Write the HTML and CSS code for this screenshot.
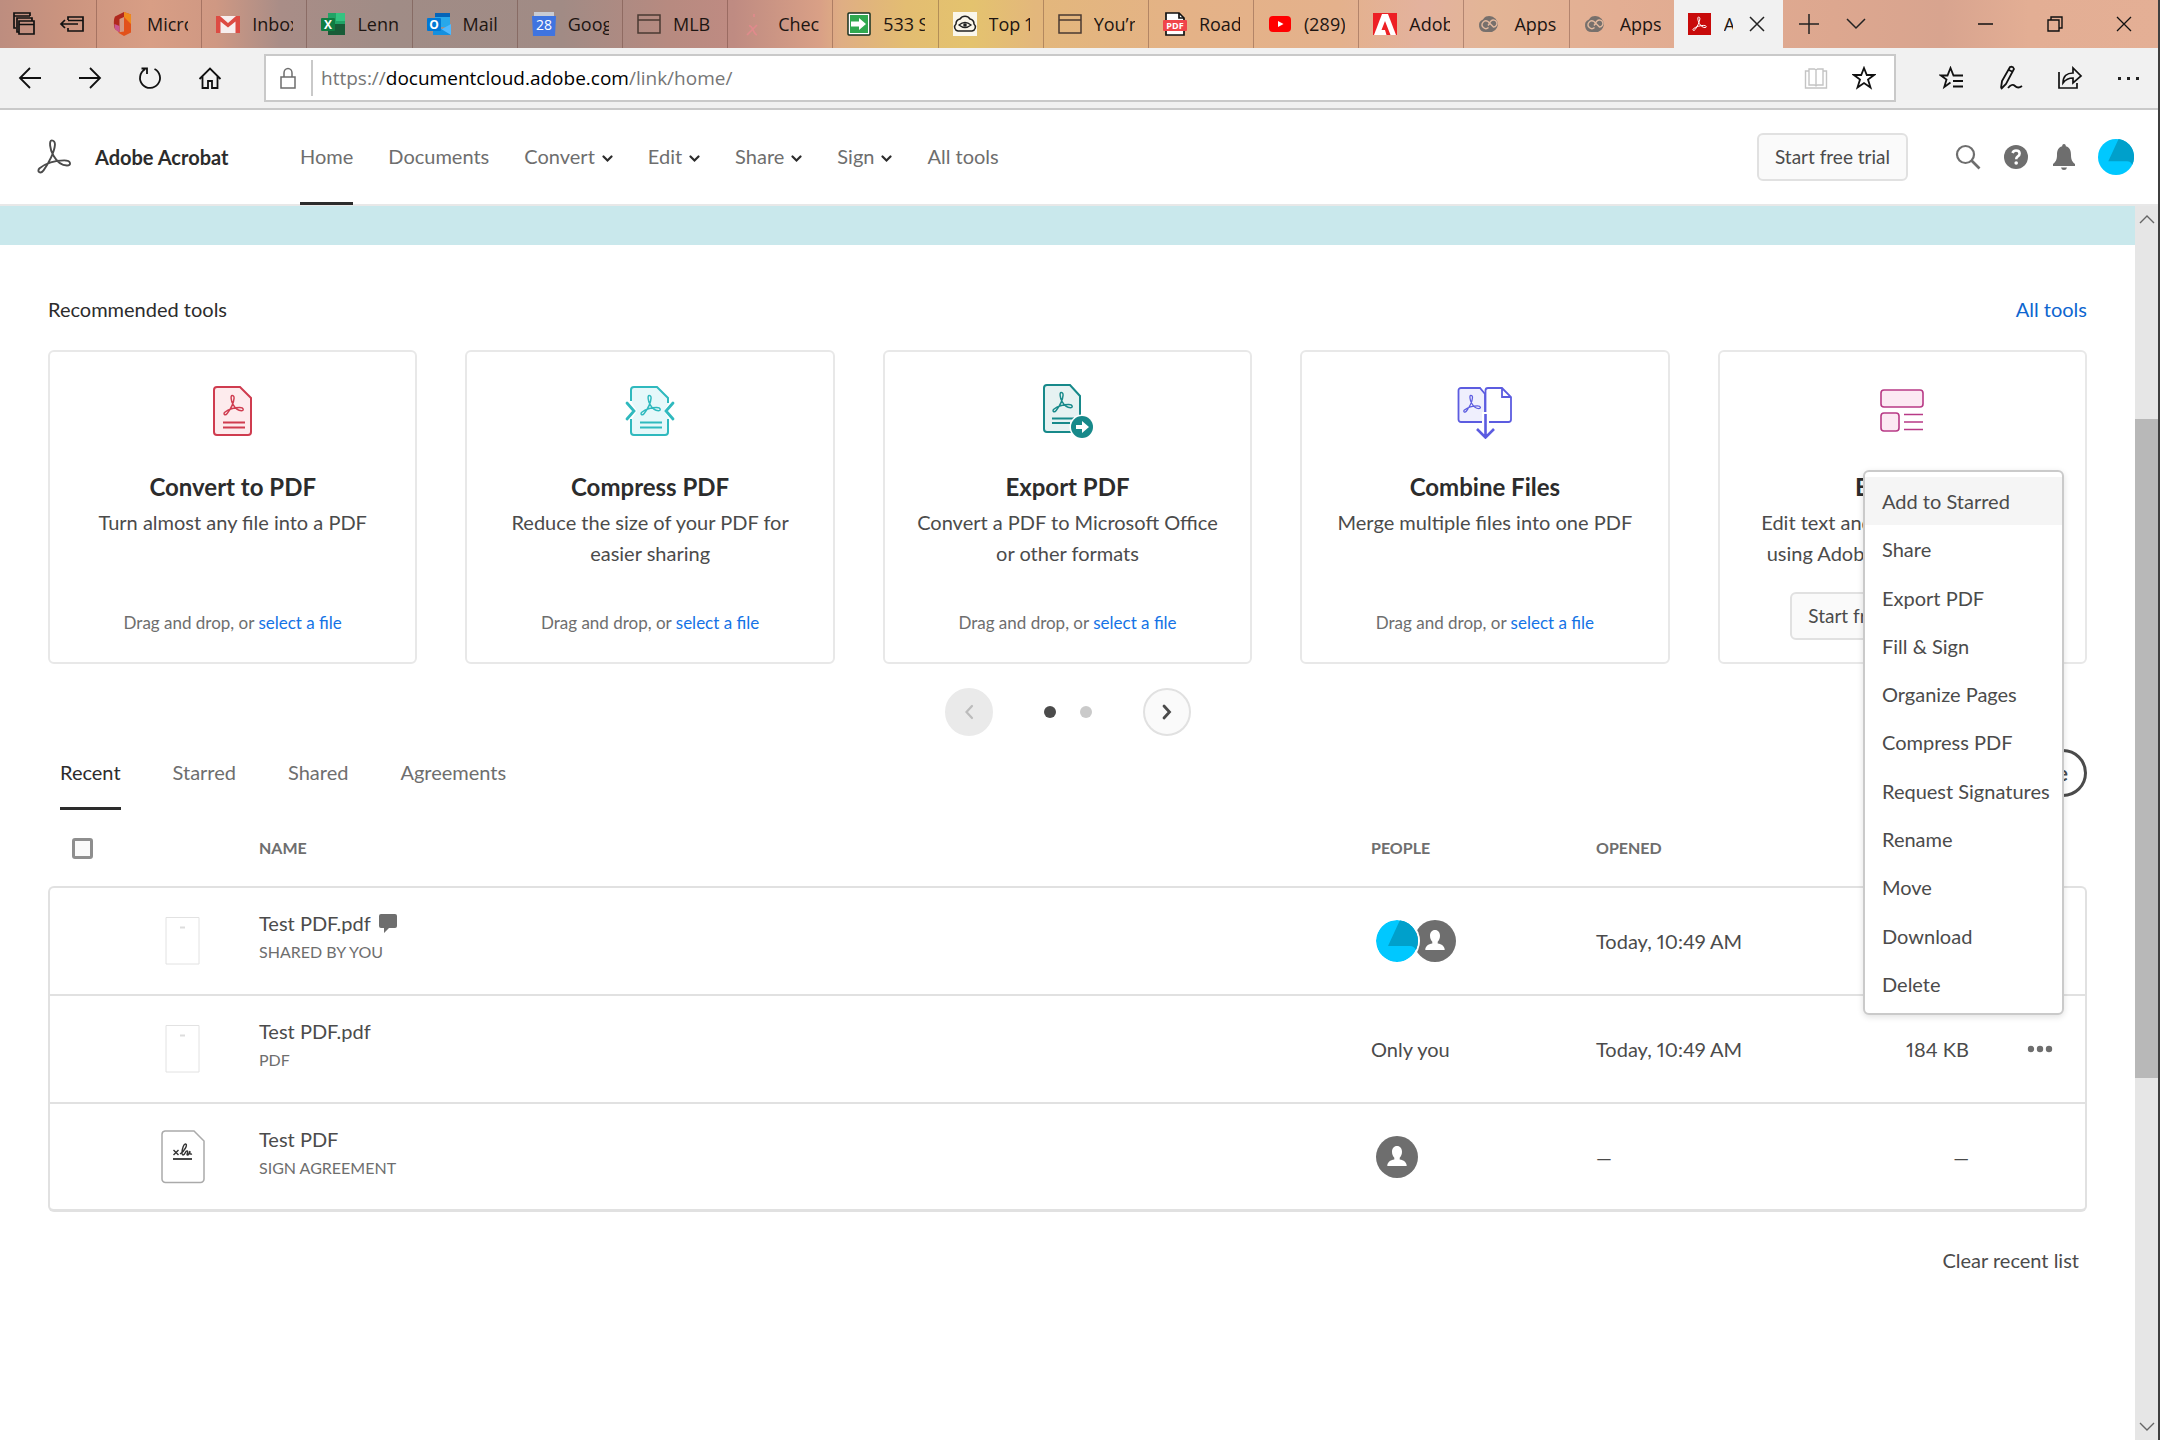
FILE: index.html
```html
<!DOCTYPE html>
<html lang="en">
<head>
<meta charset="utf-8">
<title>Adobe Acrobat</title>
<link rel="stylesheet" href="styles.css">
</head>
<body>
<svg class="defs" aria-hidden="true">
  <symbol id="acrobat" viewBox="0 0 24 24"><path d="M10.600 1.500c-1.800 0-1.300 5.500 1 9.600 1.900 3.300 5.200 6.300 8.600 6.300 3 0 2.600-3.300-1.700-3.300-5.300 0-11.600 1.800-15.600 5-2 1.900.4 4 2.500 1.300 3.200-4.300 6.900-11.600 7.200-16.100.1-1.800-.8-2.800-2-2.800z" fill="none" stroke="currentColor" stroke-linejoin="round"/></symbol>
  <symbol id="avatar" viewBox="0 0 42 42"><circle cx="21" cy="21" r="21" fill="#00c8ff"/><path d="M24 0A21 21 0 0 1 40 30Q38 26 34 26H12Z" fill="#00a0cb"/></symbol>
  <symbol id="person" viewBox="0 0 42 42"><circle cx="21" cy="21" r="21" fill="#6e6e6e"/><path d="M21 10c3.200 0 5 2.500 5 5.800 0 2.500-.8 4.400-2.300 6v1.700c4 .6 7 2.600 7 6.500H11.300c0-3.900 3-5.900 7-6.500v-1.700c-1.500-1.600-2.300-3.500-2.300-6 0-3.300 1.800-5.800 5-5.800z" fill="#fff"/></symbol>
  <symbol id="window" viewBox="0 0 24 24"><path d="M1 3h22v18H1zM1 8h22" fill="none" stroke="#4a3a32" stroke-width="1.500"/></symbol>
  <symbol id="cc" viewBox="0 0 24 24"><path d="M8 4.500a8 7.500 0 1 1 6 15.500H7.500A6.500 6.500 0 0 1 5 7.500 8 8 0 0 1 8 4.500z" fill="#77706c"/><path d="M10.500 15.500a3.800 3.800 0 1 1-.500-6l5.500 5.500a3.500 3.500 0 1 0-2.500-6c-1.500 1.500-1 2-3 4.500" fill="none" stroke="#e2b99f" stroke-width="1.400"/></symbol>
  <symbol id="chevron" viewBox="0 0 11 8"><path d="M1.500 1.500l4 4 4-4" fill="none" stroke="#2c2c2c" stroke-width="2.200" stroke-linecap="round"/></symbol>
</svg>

<header class="browser">
  <div class="strip">
    <button class="strip-btn" aria-label="Tabs set aside"><svg width="24" height="26" viewBox="0 0 24 26"><path d="M4 17H2V2h16v3M2 5h16M7 21H5V7h15v3M7 10h15v13H7zM7 13.500h15" fill="none" stroke="#111" stroke-width="1.700"/></svg></button>
    <button class="strip-btn" aria-label="Set tabs aside"><svg width="26" height="24" viewBox="0 0 26 24"><path d="M9 8V5h15v14H9v-3M9 8.500h15M19 12H2M6 8l-4 4 4 4" fill="none" stroke="#111" stroke-width="1.700"/></svg></button>
    <div class="tabs">
      <a class="tab" href="#"><svg viewBox="0 0 24 24"><path d="M13 0L4 4.500C2.500 7 2.500 14 4 17l4.500 3.500V7L13 5z" fill="#b0281d"/><path d="M3.500 12c0 3 0 4 1 5.500l4 3V14z" fill="#c9568f"/><path d="M13 0l7 2.500v18L13 24l-6-3.500 6-1z" fill="#e2521b"/><path d="M13 0l7 2.500V12l-7-7z" fill="#f08a1c"/></svg><span>Microsoft</span></a>
      <a class="tab" href="#"><svg viewBox="0 0 24 24"><path d="M1 4h22v17H1z" fill="#f7eeee"/><path d="M0 4h4l8 7 8-7h4v17h-4.500V9.500L12 15.500 4.500 9.500V21H0z" fill="#dd4b43"/></svg><span>Inbox</span></a>
      <a class="tab" href="#"><svg viewBox="0 0 24 24"><path d="M7 1h17v22H7z" fill="#21a366"/><path d="M15 1h9v8h-9z" fill="#33c481"/><path d="M7 12h17v11H7z" fill="#185c37"/><rect y="6" width="14" height="13" rx="1" fill="#107c41"/><text x="7" y="17" class="glyph">X</text></svg><span>Lenn</span></a>
      <a class="tab" href="#"><svg viewBox="0 0 24 24"><path d="M8 1h15v14H8z" fill="#28a8ea"/><path d="M8 1h15v4H8z" fill="#0364b8"/><path d="M6 12l9 5 9-5v11H6z" fill="#50b9ff"/><path d="M6 12l18 11H6z" fill="#1490df"/><rect y="6" width="14" height="13" rx="1" fill="#0078d4"/><text x="7" y="17" class="glyph">O</text></svg><span>Mail</span></a>
      <a class="tab" href="#"><svg viewBox="0 0 24 24"><path d="M2 0h20v5H2z" fill="#c9ccd4"/><path d="M0 4h24l-1 20H1z" fill="#3f74e0"/><text x="12" y="18" class="glyph date">28</text></svg><span>Google</span></a>
      <a class="tab" href="#"><svg><use href="#window"/></svg><span>MLB</span></a>
      <a class="tab" href="#"><svg viewBox="0 0 24 24"><path d="M7 14c4-1 4 8 8 9M15 13L5 23M12 2v3" stroke="#e08a8c" fill="none" stroke-width="1.700"/></svg><span>Check</span></a>
      <a class="tab" href="#"><svg viewBox="0 0 24 24"><rect x="1" y="1" width="22" height="22" rx="1" fill="#fff" stroke="#17301f" stroke-width="1.500"/><path d="M3 3h18v18H3z" fill="#2fa84f"/><path d="M4 9.500h8V6l7 6-7 6v-3.500H4z" fill="#fff"/></svg><span>533 S</span></a>
      <a class="tab" href="#"><svg viewBox="0 0 24 24"><path d="M0 0h24v24H0z" fill="#faf6ea"/><path d="M5 19a4 4 0 0 1-2-7 5 5 0 0 1 4-5 6 6 0 0 1 10 0 5 5 0 0 1 4 5 4 4 0 0 1-2 7z" fill="none" stroke="#222" stroke-width="1.500"/><path d="M6 13q6-5 12 0-6 5-12 0z" fill="none" stroke="#222" stroke-width="1.300"/><circle cx="12" cy="13" r="1.800" fill="#222"/></svg><span>Top 10</span></a>
      <a class="tab" href="#"><svg><use href="#window"/></svg><span>You’re</span></a>
      <a class="tab" href="#"><svg viewBox="0 0 24 24"><path d="M3 1h13l5 5v17H3z" fill="#fff" stroke="#111" stroke-width="1.700"/><path d="M16 1v5h5" fill="none" stroke="#111" stroke-width="1.700"/><rect x="0" y="8" width="24" height="11" rx="1" fill="#f0454a"/><text x="12" y="17" class="glyph small">PDF</text></svg><span>Road</span></a>
      <a class="tab" href="#"><svg viewBox="0 0 24 24"><rect x="1" y="4" width="22" height="16" rx="4" fill="#f00"/><path d="M10 9l5.500 3-5.500 3z" fill="#fff"/></svg><span>(289)</span></a>
      <a class="tab" href="#"><svg viewBox="0 0 24 24"><path d="M0 1h24v22H0z" fill="#ed2024"/><path d="M1 23L9 2h6l8 21z" fill="#fff"/><path d="M12 9l5.500 14h-4L12 18H8.500z" fill="#ed2024"/></svg><span>Adobe</span></a>
      <a class="tab" href="#"><svg><use href="#cc"/></svg><span>Apps</span></a>
      <a class="tab" href="#"><svg><use href="#cc"/></svg><span>Apps</span></a>
      <a class="tab active" href="#" aria-current="page"><svg viewBox="0 0 24 24"><path d="M0 1h23v22H0z" fill="#c80a0a"/><use href="#acrobat" x="3" y="4" width="17" height="16" color="#fff" stroke-width="1.500"/></svg><span>Adobe</span><svg class="tab-x" viewBox="0 0 16 16"><path d="M1 1l14 14M15 1L1 15" stroke="#222" stroke-width="1.500"/></svg></a>
    </div>
    <button class="strip-btn new" aria-label="New tab"><svg width="20" height="20" viewBox="0 0 20 20"><path d="M10 0v20M0 10h20" stroke="#222" stroke-width="1.500"/></svg></button>
    <button class="strip-btn list" aria-label="Tab previews"><svg width="20" height="12" viewBox="0 0 20 12"><path d="M1 1l9 9 9-9" fill="none" stroke="#222" stroke-width="1.500"/></svg></button>
    <div class="window-btns">
      <button aria-label="Minimize"><svg width="16" height="16" viewBox="0 0 16 16"><path d="M0 8h15" stroke="#111" stroke-width="1.500"/></svg></button>
      <button aria-label="Restore"><svg width="16" height="16" viewBox="0 0 16 16"><path d="M1 4h11v11H1zM4 4V1h11v11h-3" fill="none" stroke="#111" stroke-width="1.400"/></svg></button>
      <button aria-label="Close"><svg width="16" height="16" viewBox="0 0 16 16"><path d="M1 1l14 14M15 1L1 15" stroke="#111" stroke-width="1.300"/></svg></button>
    </div>
  </div>
  <div class="toolbar">
    <div class="tool-left">
      <button aria-label="Back"><svg width="24" height="24" viewBox="0 0 24 24"><path d="M23 12H1.500M12 2L2 12l10 10" fill="none" stroke="#111" stroke-width="1.800"/></svg></button>
      <button aria-label="Forward"><svg width="24" height="24" viewBox="0 0 24 24"><path d="M1 12h21.500M12 2l10 10-10 10" fill="none" stroke="#111" stroke-width="1.800"/></svg></button>
      <button aria-label="Refresh"><svg width="24" height="24" viewBox="0 0 24 24"><path d="M16.500 3A10 10 0 1 1 7 3.300M3.500 2.500H9V8" fill="none" stroke="#111" stroke-width="1.800"/></svg></button>
      <button aria-label="Home page"><svg width="24" height="24" viewBox="0 0 24 24"><path d="M1.500 13L12 2.500 22.500 13M4.500 10.500V22H10v-7h4v7h5.500V10.500" fill="none" stroke="#111" stroke-width="1.800"/></svg></button>
    </div>
    <div class="address">
      <svg width="18" height="22" viewBox="0 0 18 22"><path d="M2 10h14v11H2zM5 10V6a4 4.500 0 0 1 8 0v4" fill="none" stroke="#6d6d6d" stroke-width="1.500"/></svg>
      <div class="url" role="textbox" aria-label="Address" contenteditable="true" spellcheck="false">https://<b>documentcloud.adobe.com</b>/link/home/</div>
      <svg width="24" height="24" viewBox="0 0 24 24"><path d="M5 3h5.500L12 4l1.500-1H19v16h-5.500L12 20l-1.500-1H5zM12 4v16M5 5H1.500v17h21V5H19" fill="none" stroke="#c4c4c4" stroke-width="1.400"/></svg>
      <svg width="24" height="24" viewBox="0 0 24 24"><path d="M12 2l2.800 7H22l-6 4.500 2.500 8L12 17l-6.500 4.500 2.500-8L2 9h7.200z" fill="none" stroke="#111" stroke-width="1.800"/></svg>
    </div>
    <div class="tool-right">
      <button aria-label="Favorites"><svg width="26" height="24" viewBox="0 0 26 24"><path d="M24 9.500H14.500L11.500 2l-3 7.500H2l5.500 4-2.200 7.500 6.200-4.500M14 15h10M14 20.500h10" fill="none" stroke="#111" stroke-width="1.800"/></svg></button>
      <button aria-label="Add notes"><svg width="26" height="26" viewBox="0 0 26 26"><path d="M3 23l1-7L12 2q3-1 4 2L8 19l-5 5M11 5l4 2M10 23q4-5 7-2t7 0" fill="none" stroke="#111" stroke-width="1.800"/></svg></button>
      <button aria-label="Share"><svg width="26" height="24" viewBox="0 0 26 24"><path d="M2 6v16h18v-5M6 17c0-7 4-10 10-10V2l8 8-8 7v-5c-4 0-7 1-10 5z" fill="none" stroke="#111" stroke-width="1.700"/></svg></button>
      <button aria-label="Settings and more"><svg width="24" height="6" viewBox="0 0 24 6"><path d="M1 2h3v3H1zM10 2h3v3h-3zM19 2h3v3h-3z" fill="#222"/></svg></button>
    </div>
  </div>
</header>

<header class="app-bar">
  <a class="brand" href="#"><svg width="38" height="38" stroke-width="1.200"><use href="#acrobat"/></svg>Adobe Acrobat</a>
  <nav class="nav">
    <a class="current" href="#">Home</a>
    <a href="#">Documents</a>
    <button>Convert<svg><use href="#chevron"/></svg></button>
    <button>Edit<svg><use href="#chevron"/></svg></button>
    <button>Share<svg><use href="#chevron"/></svg></button>
    <button>Sign<svg><use href="#chevron"/></svg></button>
    <a href="#">All tools</a>
  </nav>
  <button class="btn">Start free trial</button>
  <div class="app-icons">
    <button aria-label="Search"><svg width="26" height="26" viewBox="0 0 26 26"><circle cx="10.500" cy="10.500" r="8.500" fill="none" stroke="#6e6e6e" stroke-width="2.200"/><path d="M16.500 16.500l8 8" stroke="#6e6e6e" stroke-width="2.600"/></svg></button>
    <button aria-label="Help"><svg width="26" height="26" viewBox="0 0 26 26"><circle cx="13" cy="13" r="12" fill="#6e6e6e"/><path d="M9.500 9q1-2.500 3.500-2.500 3.600 0 3.600 3 0 1.800-1.800 2.900-1.600 1-1.600 2.800" fill="none" stroke="#fff" stroke-width="2.600"/><circle cx="13.200" cy="19" r="1.800" fill="#fff"/></svg></button>
    <button aria-label="Notifications"><svg width="26" height="26" viewBox="0 0 26 26"><path d="M13 0c1.500 0 1.800 1 1.800 2.300C19 3.500 20 7 20 11c0 5 1.500 7 4 9v2H2v-2c2.500-2 4-4 4-9 0-4 1-7.500 5.200-8.700C11.200 1 11.500 0 13 0zM10 23.500h6q-.500 2.500-3 2.500t-3-2.500z" fill="#6e6e6e"/></svg></button>
  </div>
  <button class="me" aria-label="Account"><svg width="36" height="36"><use href="#avatar"/></svg></button>
</header>

<div class="page">
  <main class="main">
    <div class="banner"></div>
    <div class="section-head"><h2>Recommended tools</h2><a href="#">All tools</a></div>
    <div class="cards">
      <article class="card">
        <svg viewBox="0 0 56 56" color="#cf3c4f"><path d="M11 4h23l11 11v34a3 3 0 0 1-3 3H11a3 3 0 0 1-3-3V7a3 3 0 0 1 3-3z" fill="#fdebed" stroke="currentColor" stroke-width="2" transform="translate(1)"/><use href="#acrobat" x="17" y="11" width="23" height="23" stroke-width="1.500"/><path d="M18 39.500h22M18 44.500h22" stroke="currentColor" stroke-width="2"/></svg>
        <h3>Convert to PDF</h3><p>Turn almost any file into a PDF</p>
        <div class="card-foot">Drag and drop, or <a href="#">select a file</a></div>
      </article>
      <article class="card">
        <svg viewBox="0 0 56 56" color="#2fb9be"><path d="M10 5h25l12 12v3l-5 8 5 8v15H10V36l5-8-5-8z" fill="#e6f8fa"/><path d="M9 18V7a3 3 0 0 1 3-3h23l11 11v5M9 36v13a3 3 0 0 0 3 3h31a3 3 0 0 0 3-3V36" fill="none" stroke="currentColor" stroke-width="2"/><path d="M5 20l7 8-7 8M51 20l-7 8 7 8" fill="none" stroke="currentColor" stroke-width="2.800" stroke-linecap="round"/><use href="#acrobat" x="17" y="11" width="23" height="23" stroke-width="1.500"/><path d="M18 39.500h22M18 44.500h22" stroke="currentColor" stroke-width="2"/></svg>
        <h3>Compress PDF</h3><p>Reduce the size of your PDF for easier sharing</p>
        <div class="card-foot">Drag and drop, or <a href="#">select a file</a></div>
      </article>
      <article class="card">
        <svg viewBox="0 0 56 56" color="#17898a"><path d="M8 2h23l10 11v33a3 3 0 0 1-3 3H8a3 3 0 0 1-3-3V5a3 3 0 0 1 3-3z" fill="#e6f2f2" stroke="currentColor" stroke-width="2"/><use href="#acrobat" x="12" y="8" width="23" height="23" stroke-width="1.500"/><path d="M13 35.500h22M13 40h18" stroke="currentColor" stroke-width="2"/><circle cx="43" cy="44" r="12.500" fill="#fff"/><circle cx="43" cy="44" r="11" fill="currentColor"/><path d="M37 42h6v-4l7 6-7 6v-4h-6z" fill="#fff"/></svg>
        <h3>Export PDF</h3><p>Convert a PDF to Microsoft Office or other formats</p>
        <div class="card-foot">Drag and drop, or <a href="#">select a file</a></div>
      </article>
      <article class="card">
        <svg viewBox="0 0 56 56" color="#5c5ce0"><path d="M4 5h19l5 6v28H4a2.500 2.500 0 0 1-2.500-2.500v-29A2.500 2.500 0 0 1 4 5z" fill="#efeffd" stroke="currentColor" stroke-width="1.800"/><path d="M31 5h14l9 9v22.500a2.500 2.500 0 0 1-2.500 2.500H28.500v-31.500A2.500 2.500 0 0 1 31 5zM45 5v9h9" fill="#fff" stroke="currentColor" stroke-width="1.800"/><use href="#acrobat" x="5" y="11" width="20" height="20" stroke-width="1.500"/><path d="M28.500 29v22" stroke="#fff" stroke-width="7"/><path d="M28.500 31v23M20 46l8.500 8.500L37 46" fill="none" stroke="currentColor" stroke-width="2.600"/></svg>
        <h3>Combine Files</h3><p>Merge multiple files into one PDF</p>
        <div class="card-foot">Drag and drop, or <a href="#">select a file</a></div>
      </article>
      <article class="card">
        <svg viewBox="0 0 56 56" color="#b83a86"><g fill="#fce9f3" stroke="currentColor" stroke-width="1.600"><rect x="7" y="7" width="42" height="17" rx="3"/><rect x="7" y="30" width="18" height="18" rx="3"/></g><path d="M30 31.500h19M30 39h19M30 46.500h19" stroke="currentColor" stroke-width="1.600"/></svg>
        <h3>Edit PDF</h3><p>Edit text and images in PDF files using Adobe Acrobat Pro 2020</p>
        <div class="trial"><button class="btn">Start free trial</button></div>
      </article>
    </div>
    <div class="pager">
      <button class="round" disabled aria-label="Previous"><svg width="12" height="18" viewBox="0 0 12 18"><path d="M9 3L3.500 9 9 15" fill="none" stroke="#bcbcbc" stroke-width="2.200" stroke-linecap="round"/></svg></button>
      <div class="dots"><i class="on"></i><i></i></div>
      <button class="round" aria-label="Next"><svg width="12" height="18" viewBox="0 0 12 18"><path d="M3 3l5.500 6L3 15" fill="none" stroke="#4b4b4b" stroke-width="2.800" stroke-linecap="round"/></svg></button>
    </div>
    <div class="list-head">
      <nav class="list-tabs"><a class="current" href="#">Recent</a><a href="#">Starred</a><a href="#">Shared</a><a href="#">Agreements</a></nav>
      <button class="upload">Upload a file</button>
    </div>
    <table class="files">
      <colgroup><col class="c-check"><col class="c-thumb"><col><col class="c-people"><col class="c-opened"><col class="c-size"><col class="c-more"></colgroup>
      <thead><tr><th class="check"><input type="checkbox" aria-label="Select all"></th><th></th><th>NAME</th><th>PEOPLE</th><th>OPENED</th><th></th><th></th></tr></thead>
      <tbody>
        <tr>
          <td></td><td class="thumb"><svg width="44" height="56" viewBox="0 0 44 56"><path d="M5 4.500h33V51H5z" fill="#fff" stroke="#e2e2e2"/><path d="M19 14.500h5" stroke="#ddd" stroke-width="2"/></svg></td>
          <td class="file"><div class="fname">Test PDF.pdf <svg width="18" height="19" viewBox="0 0 18 19"><path d="M2 0h14a2 2 0 0 1 2 2v10a2 2 0 0 1-2 2h-6l-5 5v-5H2a2 2 0 0 1-2-2V2a2 2 0 0 1 2-2z" fill="#6e6e6e"/></svg></div><div class="fkind">SHARED BY YOU</div></td>
          <td><div class="people"><svg width="42" height="42"><use href="#person"/></svg><svg class="top" width="42" height="42"><use href="#avatar"/></svg></div></td>
          <td>Today, 10:49 AM</td><td class="size"></td><td></td>
        </tr>
        <tr>
          <td></td><td class="thumb"><svg width="44" height="56" viewBox="0 0 44 56"><path d="M5 4.500h33V51H5z" fill="#fff" stroke="#e2e2e2"/><path d="M19 14.500h5" stroke="#ddd" stroke-width="2"/></svg></td>
          <td class="file"><div class="fname">Test PDF.pdf</div><div class="fkind">PDF</div></td>
          <td>Only you</td><td>Today, 10:49 AM</td><td class="size">184 KB</td>
          <td class="more"><button aria-label="More"><svg width="26" height="8" viewBox="0 0 26 8"><g fill="#6e6e6e"><circle cx="4" cy="4" r="3.200"/><circle cx="13" cy="4" r="3.200"/><circle cx="22" cy="4" r="3.200"/></g></svg></button></td>
        </tr>
        <tr>
          <td></td><td class="thumb"><svg width="44" height="56" viewBox="0 0 44 56"><path d="M4 2h29l10 10v38a3.500 3.500 0 0 1-3.500 3.500H4.500A3.500 3.500 0 0 1 1 50V5.500A3.500 3.500 0 0 1 4 2z" fill="#fff" stroke="#aaa" stroke-width="1.500"/><path d="M12 30h19" stroke="#333" stroke-width="1.800"/><path d="M12.500 21l5 5M17.500 21l-5 5M19 25c5-3 8-10 5.500-10s-5 11-2.500 11 2-4 4-4-1 4 .5 4 2.500-4 2.500-4-1 4 2 3" fill="none" stroke="#333" stroke-width="1.400"/></svg></td>
          <td class="file"><div class="fname">Test PDF</div><div class="fkind">SIGN AGREEMENT</div></td>
          <td><div class="people"><svg width="42" height="42"><use href="#person"/></svg></div></td>
          <td>—</td><td class="size">—</td><td></td>
        </tr>
      </tbody>
    </table>
    <div class="list-foot"><a href="#">Clear recent list</a></div>
    <ul class="menu" role="menu">
      <li><button role="menuitem" class="hover">Add to Starred</button></li>
      <li><button role="menuitem">Share</button></li>
      <li><button role="menuitem">Export PDF</button></li>
      <li><button role="menuitem">Fill &amp; Sign</button></li>
      <li><button role="menuitem">Organize Pages</button></li>
      <li><button role="menuitem">Compress PDF</button></li>
      <li><button role="menuitem">Request Signatures</button></li>
      <li><button role="menuitem">Rename</button></li>
      <li><button role="menuitem">Move</button></li>
      <li><button role="menuitem">Download</button></li>
      <li><button role="menuitem">Delete</button></li>
    </ul>
  </main>
  <div class="scrollbar" aria-hidden="true">
    <svg width="16" height="10" viewBox="0 0 16 10"><path d="M1 9l7-7 7 7" fill="none" stroke="#666" stroke-width="1.400"/></svg>
    <div class="thumb-bar"></div>
    <svg width="16" height="10" viewBox="0 0 16 10"><path d="M1 1l7 7 7-7" fill="none" stroke="#666" stroke-width="1.400"/></svg>
  </div>
</div>
</body>
</html>
```

FILE: styles.css
```css
* { box-sizing: border-box; }

body {
  margin: 0;
  min-height: 100vh;
  display: flex;
  flex-direction: column;
  border-right: 2px solid #3f3f3f;
  background: #fff;
  color: #4b4b4b;
  font: 20px/30px Lato, "Open Sans", sans-serif;
  font-variant-numeric: proportional-nums;
}

a { color: inherit; text-decoration: none; }
button { margin: 0; padding: 0; border: 0; background: none; font: inherit; color: inherit; }
svg { display: block; flex: none; }
h2, h3, p, ul { margin: 0; padding: 0; }
.defs { position: absolute; width: 0; height: 0; }

/* Browser frame */
.browser { font-family: "Open Sans", "Noto Sans", sans-serif; font-size: 18px; }
.strip {
  display: flex;
  height: 48px;
  background: linear-gradient(90deg, #bd8d7f 0, #cb947f 3%, #d89e85 7%, #cf9883 10%, #a98d87 13%, #a08c86 18%, #a18b85 26%, #b78a80 31%, #bf8b82 34%, #d9a086 38%, #dfae84 39%, #e3bd72 42%, #e4c36e 45%, #e3b77c 48%, #e4b287 55%, #e4b18c 62%, #e3b29e 66%, #e3b596 69%, #e3ae93 75%, #dda78f 85%, #d8a48f 90%, #e3ae94 94%, #e4af95 100%);
}
.strip button { display: flex; align-items: center; justify-content: center; }
.strip-btn { width: 48px; }
.strip-btn.new { width: 52px; }
.strip-btn.list { width: 42px; }
.tabs { flex: 1; display: flex; min-width: 0; }
.tab {
  flex: 1 1 0;
  min-width: 0;
  display: flex;
  align-items: center;
  gap: 12px;
  padding: 0 13px 0 14px;
  border-left: 1px solid rgba(90, 50, 40, .35);
  color: #1d1512;
}
.tab svg { width: 24px; height: 24px; }
.tab span { flex: 1; overflow: hidden; white-space: nowrap; }
.tab.active { background: #f1f1f1; border-left: 0; padding-right: 18px; }
.tab .tab-x { width: 16px; height: 16px; margin-left: 4px; }
.glyph { font: bold 12px "Open Sans", sans-serif; fill: #fff; text-anchor: middle; }
.glyph.small { font-size: 9px; }
.glyph.date { font-size: 14px; font-weight: 400; }
.window-btns { display: flex; margin-left: auto; padding-left: 74px; }
.window-btns button { width: 69px; }

.toolbar {
  display: flex;
  align-items: center;
  height: 62px;
  background: #f1f1f1;
  border-bottom: 2px solid #c9c9c9;
}
.tool-left, .tool-right { display: flex; }
.toolbar button { display: flex; align-items: center; justify-content: center; width: 60px; height: 48px; }
.toolbar .tool-right button { width: 59px; }
.address {
  flex: 1;
  display: flex;
  align-items: center;
  height: 48px;
  margin: 0 26px 0 24px;
  padding: 0 18px 0 13px;
  gap: 24px;
  background: #fff;
  border: 2px solid #c9c9c9;
}
.url { flex: 1; height: 36px; line-height: 36px; font-size: 19px; margin-left: -10px; padding-left: 8px; border-left: 2px solid #c9c9c9; color: #767676; white-space: nowrap; }
.url b { font-weight: 400; color: #000; }

/* Application header */
.app-bar {
  display: flex;
  align-items: center;
  height: 96px;
  padding: 0 24px 0 35px;
  border-bottom: 2px solid #e8e8e8;
}
.brand { display: flex; align-items: center; gap: 22px; width: 265px; font-weight: 700; color: #2c2c2c; white-space: nowrap; }
.brand svg { color: #4b4b4b; }
.nav { flex: 1; display: flex; align-self: stretch; gap: 35px; margin-bottom: -1px; color: #6e6e6e; }
.nav a, .nav button { display: flex; align-items: center; gap: 7px; border-bottom: 3px solid transparent; }
.nav svg { width: 11px; height: 8px; margin-top: 6px; }
.nav .current { border-bottom-color: #2c2c2c; }
.btn { height: 48px; padding: 0 16px; border: 2px solid #e1e1e1; border-radius: 6px; background: #fafafa; color: #4b4b4b; font-size: 19px; white-space: nowrap; }
.app-icons { display: flex; gap: 22px; margin-left: 47px; }
.me { margin-left: 21px; }

/* Page */
.page { flex: 1; display: flex; }
.main { position: relative; flex: 1; min-width: 0; padding: 0 48px 40px; }
.banner { height: 39px; margin: 0 -48px; background: #c9e8ec; }
.section-head { display: flex; justify-content: space-between; margin: 49px 0 26px; }
.section-head h2 { font-size: 20px; font-weight: 400; color: #2c2c2c; }
.section-head a { color: #0d66d0; }

.cards { display: grid; grid-template-columns: repeat(5, 1fr); gap: 48px; }
.card {
  display: flex;
  flex-direction: column;
  align-items: center;
  min-height: 314px;
  padding: 31px 32px 22px;
  border: 2px solid #e8e8e8;
  border-radius: 6px;
  text-align: center;
}
.card > svg { width: 56px; height: 56px; }
.card h3 { margin: 32px 0 4px; font-size: 24px; line-height: 32px; font-weight: 700; color: #2c2c2c; }
.card p { line-height: 31px; }
.card-foot { margin-top: auto; padding-bottom: 2px; font-size: 17px; color: #6e6e6e; }
.card-foot a { color: #1473e6; }
.trial { display: flex; width: 224px; margin-top: auto; }

.pager { display: flex; justify-content: center; align-items: center; gap: 51px; margin-top: 24px; }
.round { display: flex; align-items: center; justify-content: center; width: 48px; height: 48px; border: 2px solid #e1e1e1; border-radius: 50%; background: #fafafa; }
.round:disabled { border-color: #eaeaea; background: #eaeaea; }
.dots { display: flex; gap: 24px; }
.dots i { width: 12px; height: 12px; border-radius: 50%; background: #cacaca; }
.dots .on { background: #4b4b4b; }

.list-head { display: flex; align-items: center; justify-content: space-between; height: 74px; }
.list-tabs { display: flex; align-self: stretch; gap: 52px; padding-left: 12px; color: #6e6e6e; }
.list-tabs a { display: flex; align-items: center; border-bottom: 3px solid transparent; }
.list-tabs .current { color: #2c2c2c; border-bottom-color: #2c2c2c; }
.upload { height: 48px; padding: 0 16px; border: 3px solid #4b4b4b; border-radius: 24px; font-weight: 700; }

.files { width: 100%; table-layout: fixed; border-collapse: separate; border-spacing: 0; }
.c-check { width: 62px; }
.c-thumb { width: 149px; }
.c-people { width: 225px; }
.c-opened { width: 228px; }
.c-size { width: 145px; }
.c-more { width: 118px; }
th, td { padding: 0; text-align: left; vertical-align: middle; }
th { height: 76px; font-size: 16px; font-weight: 700; color: #6e6e6e; }
.check { padding-left: 24px; }
.check input { display: block; appearance: none; width: 21px; height: 21px; margin: 0; border: 3px solid #8e8e8e; border-radius: 3px; background: #fafafa; }
td { height: 108px; border-top: 2px solid #e1e1e1; }
td:first-child { border-left: 2px solid #e1e1e1; }
td:last-child { border-right: 2px solid #e1e1e1; }
tbody tr:first-child td:first-child { border-top-left-radius: 6px; }
tbody tr:first-child td:last-child { border-top-right-radius: 6px; }
tbody tr:last-child td { height: 110px; border-bottom: 3px solid #e1e1e1; }
tbody tr:last-child td:first-child { border-bottom-left-radius: 6px; }
tbody tr:last-child td:last-child { border-bottom-right-radius: 6px; }
.thumb { padding-right: 4px; }
.thumb svg { margin: 0 auto; }
.file { padding-bottom: 8px; }
.fname { display: flex; align-items: center; gap: 8px; }
.fkind { font-size: 16px; line-height: 28px; color: #6e6e6e; }
.people { display: flex; padding-left: 5px; }
.people .top { order: -1; margin-right: -4px; border-radius: 50%; box-shadow: 0 0 0 2px #fff; position: relative; }
.size { text-align: right; }
.more { padding-left: 26px; }
.more button { display: block; margin: 0 auto; padding: 8px; }
.list-foot { display: flex; justify-content: flex-end; padding: 33px 8px 0 0; }

.menu {
  position: absolute;
  top: 264px;
  right: 71px;
  display: grid;
  grid-auto-rows: 1fr;
  width: 201px;
  height: 545px;
  padding: 5px 0;
  list-style: none;
  background: #fff;
  border: 2px solid #cacaca;
  border-radius: 6px;
  box-shadow: 0 2px 6px rgba(0, 0, 0, .12);
}
.menu button { width: 100%; height: 100%; padding-left: 17px; text-align: left; white-space: nowrap; }
.menu .hover { background: #f5f5f5; }

.scrollbar {
  display: grid;
  grid-template-rows: 213fr 659fr 362fr;
  justify-items: center;
  width: 23px;
  background: #e6e6e6;
}
.scrollbar svg { margin: 8px 0; }
.scrollbar svg:last-child { align-self: end; }
.thumb-bar { width: 100%; background: #b8b8b8; }
```
